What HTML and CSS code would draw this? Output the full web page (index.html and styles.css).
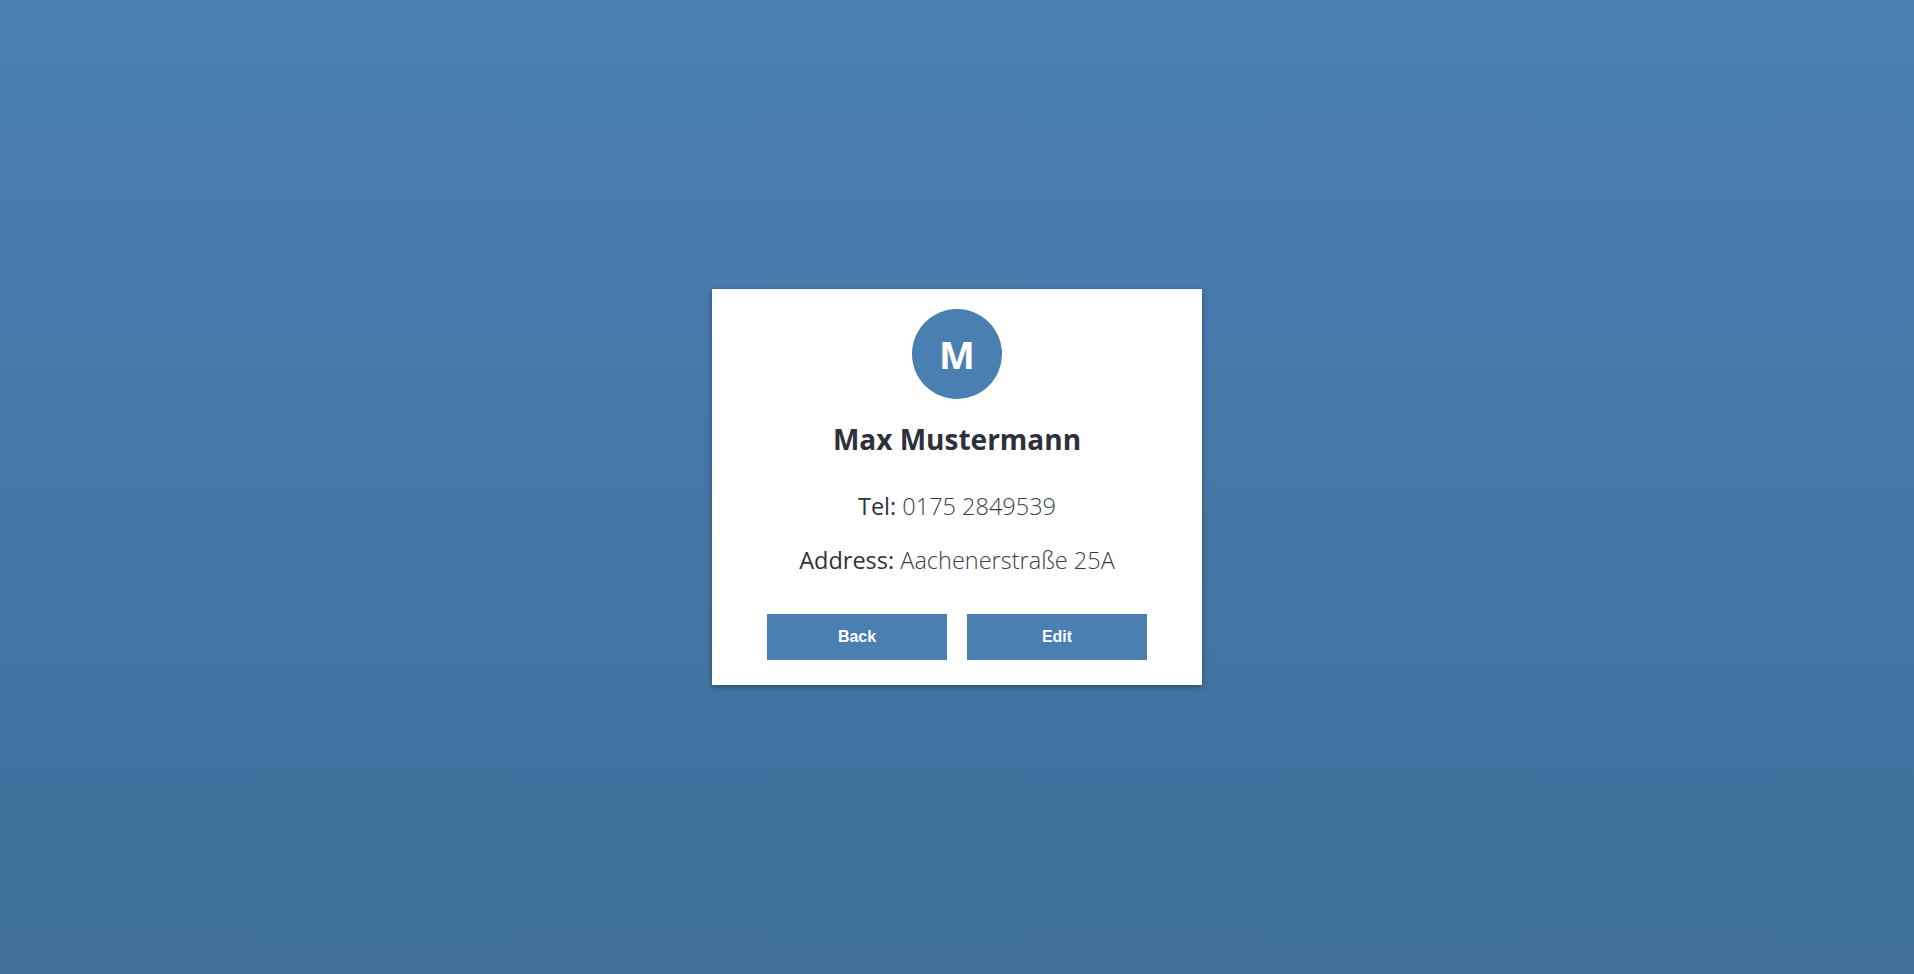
FILE: index.html
```html
<!DOCTYPE html>
<html lang="de">
<head>
<meta charset="utf-8">
<title>Contact</title>
<link rel="stylesheet" href="styles.css">
</head>
<body>
<main class="page">
  <section class="card">
    <div class="avatar">M</div>
    <h2 class="name">Max Mustermann</h2>
    <p class="info"><span class="label">Tel:</span> <span class="value">0175 2849539</span></p>
    <p class="info"><span class="label">Address:</span> <span class="value">Aachenerstraße 25A</span></p>
    <div class="actions">
      <button class="btn">Back</button>
      <button class="btn">Edit</button>
    </div>
  </section>
</main>
</body>
</html>
```
FILE: styles.css
```css
html, body {
  margin: 0;
  padding: 0;
  height: 100%;
}
body {
  background: linear-gradient(to bottom, #4a80b2, #3f6f9a);
  font-family: "Open Sans", "Noto Sans", sans-serif;
  color: #2f323b;
}
.page {
  height: 100%;
  display: flex;
  align-items: center;
  justify-content: center;
}
.card {
  width: 490px;
  box-sizing: border-box;
  background: #fff;
  padding: 20px 0 25px;
  box-shadow: 0 2px 6px rgba(0, 0, 0, 0.35);
  display: flex;
  flex-direction: column;
  align-items: center;
}
.avatar {
  width: 90px;
  height: 90px;
  border-radius: 50%;
  background: #4a7fb1;
  color: #fff;
  font-family: "Open Sans", "Noto Sans", sans-serif;
  font-weight: 700;
  font-size: 38px;
  display: flex;
  align-items: center;
  justify-content: center;
}
.name {
  margin: 24px 0 0;
  font-size: 28px;
  font-weight: 700;
  line-height: 1.2;
  color: #2e313b;
}
.info {
  margin: 35px 0 0;
  font-size: 23.5px;
  line-height: 1.2;
}
.info + .info {
  margin-top: 26px;
}
.label {
  font-weight: 400;
  color: #2f323b;
}
.value {
  font-weight: 300;
  color: #3a3d45;
}
.actions {
  display: flex;
  gap: 20px;
  margin-top: 40px;
}
.btn {
  width: 180px;
  height: 46px;
  border: none;
  background: #4a7fb1;
  color: #fff;
  font-family: "Liberation Sans", Arial, sans-serif;
  font-weight: 700;
  font-size: 16px;
  padding: 0;
}
```
